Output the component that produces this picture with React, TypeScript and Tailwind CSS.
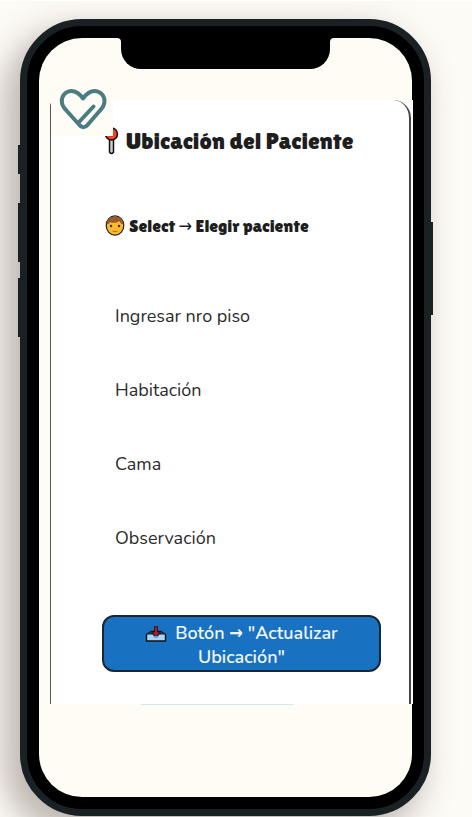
import React from "react";

function HeartLogo() {
  return (
    <svg viewBox="0 0 48 44" className="h-11 w-12" fill="none" stroke="#4c7c83" strokeWidth="4" strokeLinecap="round" strokeLinejoin="round" aria-hidden="true">
      <path d="M24 10.500 C20 5 16 3 12.500 3 C7 3 2.800 7.500 2.800 13 C2.800 17 4.500 19.500 7 22 L20 36.500 C22.500 40 26 40 28.500 37 L41 22.500 C44 19.500 45.500 17 45.500 13 C45.500 7.500 41 3 35.500 3 C32 3 28 5 24 10.500 Z" />
      <path d="M20.500 33.500 L34.500 18.500" />
    </svg>
  );
}

function PinIcon() {
  return (
    <svg viewBox="0 0 14 28" className="h-7 w-[14px] shrink-0" aria-hidden="true">
      <path d="M4.500 11 H8.500 V25 Q6.500 28 4.500 25 Z" fill="#c9ced1" stroke="#111" strokeWidth="1.500" />
      <circle cx="6.500" cy="7" r="6" fill="#f4401c" stroke="#111" strokeWidth="1.500" />
    </svg>
  );
}

function FaceIcon() {
  return (
    <svg viewBox="0 0 20 22" className="h-[22px] w-5 shrink-0" aria-hidden="true">
      <ellipse cx="10" cy="10.500" rx="8.800" ry="9.600" fill="#fcb92c" stroke="#222" strokeWidth="1.200" />
      <path d="M1.600 9.500 C1.800 4 5.500 1.500 10 1.500 C14.500 1.500 18.200 4 18.400 9.500 C16 9 15 7.500 14.500 6 C12 8 8 8.500 5 7 C4.500 8.500 3.500 9.500 1.600 9.500 Z" fill="#9a5a2c" />
      <circle cx="6" cy="11" r="1.200" fill="#4a2c14" />
      <circle cx="14" cy="11" r="1.200" fill="#4a2c14" />
      <path d="M7.500 16 Q10 17.500 12.500 16" fill="none" stroke="#b56a16" strokeWidth="1" />
    </svg>
  );
}

function InboxIcon() {
  return (
    <svg viewBox="0 0 22 18" className="mr-2 inline-block h-[18px] w-[22px] align-[-4px]" aria-hidden="true">
      <path d="M1.500 9.500 L6 6.500 H16 L20.500 9.500 V16 H1.500 Z" fill="#a8d5f2" stroke="#111" strokeWidth="1.400" strokeLinejoin="round" />
      <path d="M2.500 9.600 L6.500 7 H15.500 L19.500 9.600 H14.500 L13 11 H9 L7.500 9.600 Z" fill="#17222c" />
      <path d="M8 11 Q11 15.500 14 11 Z" fill="#5ea9e2" />
      <path d="M11 1 V9" stroke="#111" strokeWidth="3.600" />
      <path d="M11 1.500 V8 M9 7.500 L11 10 L13 7.500" fill="none" stroke="#c8172b" strokeWidth="1.800" />
    </svg>
  );
}

function Notch() {
  return (
    <div className="flex items-start justify-center px-[78px]">
      <svg viewBox="0 0 4 4" className="size-1 shrink-0" aria-hidden="true"><path d="M0 0 H4 V4 Q4 0 0 0 Z" /></svg>
      <div className="h-[31px] flex-1 rounded-b-[20px] bg-black" />
      <svg viewBox="0 0 4 4" className="size-1 shrink-0" aria-hidden="true"><path d="M4 0 H0 V4 Q0 0 4 0 Z" /></svg>
    </div>
  );
}

const fields = ["Ingresar nro piso", "Habitación", "Cama", "Observación"];

function LocationForm() {
  return (
    <section className="relative ml-[11px] -mr-px bg-white pr-[2px]">
      <form className="flex flex-col rounded-tl-md rounded-tr-[18px] border-x border-r-2 border-l-[#555] border-r-[#444] pt-[25px] pr-[28px] pb-8 pl-[51px]" onSubmit={(e) => e.preventDefault()}>
        <h1 className="flex h-8 items-center gap-[7px] pl-[3px] text-2xl leading-8 whitespace-nowrap text-[#1e1e1e]">
          <PinIcon />
          Ubicación del Paciente
        </h1>
        <div className="mt-[57px] flex h-6 items-center gap-1 pl-[3px]">
          <label htmlFor="paciente"><FaceIcon /></label>
          <select id="paciente" aria-label="Elegir paciente" className="w-full appearance-none bg-transparent text-lg leading-6 text-[#1e1e1e] outline-none">
            <option>Select → Elegir paciente</option>
          </select>
        </div>
        <div className="flex flex-col gap-[50px] pt-[66px] pb-[65px] pl-[13px] font-[Nunito,'Noto_Sans',sans-serif]">
          {fields.map((f) => (
            <input key={f} type="text" aria-label={f} placeholder={f} className="h-6 w-full bg-transparent text-lg leading-6 text-[#1e1e1e] outline-none placeholder:text-[#2b2b2b] placeholder:opacity-100" />
          ))}
        </div>
        <button type="submit" className="rounded-xl border-2 border-[#1b2733] bg-[#1971c2] px-8 pt-1 pb-[1px] font-[Nunito,'DejaVu_Sans_Condensed','Noto_Sans',sans-serif] text-lg leading-6 font-semibold text-[#f1f6fb]">
          <InboxIcon />
          Botón → "Actualizar Ubicación"
        </button>
      </form>
      <div className="absolute -top-3 left-px flex h-12 w-[62px] bg-[#fffcf6] pl-2">
        <HeartLogo />
      </div>
    </section>
  );
}

export default function App() {
  return (
    <main className="flex min-h-screen items-start overflow-hidden border-t border-white bg-[#fdfbf6] pt-[18px] pr-[39px] pb-px pl-[18px] font-['Lilita_One','DejaVu_Sans_Condensed',Lato,sans-serif]">
      <div className="z-10 flex w-[2px] flex-col pt-[126px]" aria-hidden="true">
        <span className="mb-[29px] h-[29px] bg-[#1a2125]" />
        <span className="mb-4 h-[59px] bg-[#1a2125]" />
        <span className="h-[59px] bg-[#1a2125]" />
      </div>
      <div className="min-w-0 flex-1 rounded-[62px] border-[7px] border-[#1a2125] bg-black p-3 shadow-[-12px_14px_32px_4px_rgba(70,50,45,0.34)]">
        <div className="rounded-[43px] bg-[#fffcf6] pb-[92px]">
          <div className="pb-[31px]"><Notch /></div>
          <LocationForm />
          <div className="ml-[102px] h-px w-[152px] bg-[#cfe9e6]" />
        </div>
      </div>
      <div className="z-10 flex w-[2px] flex-col pt-[203px]" aria-hidden="true">
        <span className="h-[93px] bg-[#1a2125]" />
      </div>
    </main>
  );
}
